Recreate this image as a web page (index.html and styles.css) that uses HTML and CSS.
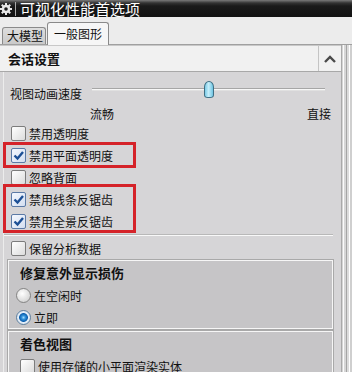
FILE: index.html
```html
<!DOCTYPE html>
<html lang="zh">
<head>
<meta charset="utf-8">
<title>可视化性能首选项</title>
<link rel="stylesheet" href="styles.css">
</head>
<body>
<div class="titlebar">
  <svg class="gear" width="12" height="12" viewBox="0 0 12 12">
    <g fill="#e8e8e8">
      <rect x="5" y="0" width="2" height="12"/>
      <rect x="0" y="5" width="12" height="2"/>
      <rect x="5" y="0" width="2" height="12" transform="rotate(45 6 6)"/>
      <rect x="5" y="0" width="2" height="12" transform="rotate(-45 6 6)"/>
      <circle cx="6" cy="6" r="4.3"/>
    </g>
    <circle cx="6" cy="6" r="1.8" fill="#1a1a1a"/>
  </svg>
  <span class="tsep"></span>
  <span class="ttext">可视化性能首选项</span>
</div>
<div class="tabstrip">
  <div class="tab">大模型</div>
  <div class="tab active">一般图形</div>
</div>
<div class="frame">
  <div class="content">
    <div class="shead">
      <span class="stitle">会话设置</span>
      <span class="collapse">
        <svg width="12" height="8" viewBox="0 0 12 8"><path d="M1 7 L6 2 L11 7" fill="none" stroke="#4a4a4a" stroke-width="2.4"/></svg>
      </span>
    </div>
    <div class="sbody">
      <div class="slider-row">
        <span class="slabel">视图动画速度</span>
        <div class="slider">
          <div class="track"></div>
          <div class="thumb"></div>
        </div>
      </div>
      <div class="ticks"><span>流畅</span><span>直接</span></div>
      <div class="row"><span class="cb"></span>禁用透明度</div>
      <div class="mark one">
        <div class="row"><span class="cb checked"><svg width="13" height="13" viewBox="0 0 13 13"><path d="M2.5 6.5 L5.5 9.5 L11 3" fill="none" stroke="#1c4f95" stroke-width="2.4"/></svg></span>禁用平面透明度</div>
      </div>
      <div class="row"><span class="cb"></span>忽略背面</div>
      <div class="mark two">
        <div class="row"><span class="cb checked"><svg width="13" height="13" viewBox="0 0 13 13"><path d="M2.5 6.5 L5.5 9.5 L11 3" fill="none" stroke="#1c4f95" stroke-width="2.4"/></svg></span>禁用线条反锯齿</div>
        <div class="row"><span class="cb checked"><svg width="13" height="13" viewBox="0 0 13 13"><path d="M2.5 6.5 L5.5 9.5 L11 3" fill="none" stroke="#1c4f95" stroke-width="2.4"/></svg></span>禁用全景反锯齿</div>
      </div>
      <div class="hr"></div>
      <div class="row"><span class="cb"></span>保留分析数据</div>
      <div class="group">
        <div class="ghead">修复意外显示损伤</div>
        <div class="grow"><span class="rb"></span>在空闲时</div>
        <div class="grow"><span class="rb on"></span>立即</div>
      </div>
      <div class="group">
        <div class="ghead">着色视图</div>
        <div class="grow"><span class="cb"></span>使用存储的小平面渲染实体</div>
      </div>
    </div>
  </div>
  <div class="edge"></div>
</div>
</body>
</html>
```

FILE: styles.css
```css
html, body {
  margin: 0;
  padding: 0;
}
body {
  width: 352px;
  height: 372px;
  overflow: hidden;
  background: #d6d5d7;
  font-family: "Noto Sans CJK SC", "Noto Sans", sans-serif;
  font-size: 12px;
  color: #111;
}
.titlebar {
  height: 17px;
  display: flex;
  align-items: center;
  background: linear-gradient(#7a7a7a 0, #333 3px, #1a1a1a 6px, #121212 100%);
  color: #fff;
}
.gear {
  flex: none;
}
.tsep {
  width: 1px;
  height: 14px;
  background: #aaa;
  margin: 0 4px 0 3px;
}
.ttext {
  font-size: 15px;
  line-height: 17px;
}
.tabstrip {
  height: 27px;
  background: #ececec;
  border-bottom: 1px solid #a0a0a0;
  display: flex;
  align-items: flex-end;
  padding-left: 2px;
  gap: 1px;
}
.tab {
  height: 16px;
  line-height: 16px;
  padding: 0 2px 0 4px;
  border: 1px solid #8a8a8a;
  border-bottom: none;
  border-radius: 3px 3px 0 0;
  background: linear-gradient(#dedede, #c9c9c9);
  font-size: 12px;
}
.tab.active {
  height: 22px;
  line-height: 22px;
  padding: 0 6px;
  background: #f6f6f6;
  margin-bottom: -1px;
}
.frame {
  display: flex;
  height: 327px;
}
.content {
  flex: 1;
  display: flex;
  flex-direction: column;
  overflow: hidden;
}
.edge {
  width: 11px;
  background: linear-gradient(to right, #a9a9a9 0 1px, #d4d4d4 1px 2px, #fbfbfb 2px 3px, #d6d6d6 3px 5px, #a4a4a4 5px 6px, #dcdcdc 6px 8px, #ffffff 8px 9px, #cfcfcf 9px 11px);
}
.shead {
  height: 27px;
  flex: none;
  display: flex;
  align-items: center;
  background: #f1f1f1;
  border-top: 1px solid #c8c8c8;
  border-bottom: 1px solid #a8a8a8;
  box-sizing: border-box;
}
.stitle {
  flex: 1;
  padding-left: 8px;
  font-size: 13px;
  font-weight: bold;
}
.collapse {
  width: 23px;
  height: 100%;
  display: flex;
  align-items: center;
  justify-content: center;
  border-left: 1px solid #c4c4c4;
  box-sizing: border-box;
}
.sbody {
  flex: 1;
  margin-left: 3px;
  border-left: 1px solid #ececec;
  display: flex;
  flex-direction: column;
}
.slider-row {
  display: flex;
  height: 22px;
  margin-top: 10px;
  padding-left: 6px;
  align-items: center;
}
.slabel {
  width: 72px;
}
.slider {
  position: relative;
  width: 233px;
  height: 22px;
  margin-left: 10px;
}
.track {
  margin-top: 6px;
  height: 1px;
  border-top: 1px solid #a6a6a6;
  background: #f7f7f7;
  border-bottom: 1px solid #e0e0e0;
}
.thumb {
  position: absolute;
  left: 112px;
  top: -1px;
  width: 8px;
  height: 15px;
  border: 1px solid #3e6f84;
  border-radius: 5px 5px 4px 4px / 6px 6px 3px 3px;
  background: linear-gradient(to right, #7ccbe6, #c6eefa 45%, #6ec4e2);
}
.ticks {
  height: 18px;
  display: flex;
  justify-content: space-between;
  align-items: center;
  padding-left: 86px;
  padding-right: 10px;
}
.row {
  height: 22px;
  display: flex;
  align-items: center;
  padding-left: 7px;
}
.cb {
  width: 13px;
  height: 13px;
  flex: none;
  margin-right: 3px;
  border: 1px solid #7c7c7c;
  border-radius: 2px;
  background: linear-gradient(135deg, #ffffff, #dcdcdc);
  display: flex;
  align-items: center;
  justify-content: center;
}
.cb.checked {
  border-color: #5b7aa6;
  background: linear-gradient(135deg, #f4f8ff, #d3def0);
}
.mark {
  position: relative;
}
.mark::after {
  content: "";
  position: absolute;
  left: -1px;
  width: 127px;
  top: -2px;
  bottom: -2px;
  border: 3px solid #d52329;
}
.mark.two::after {
  top: -4px;
  bottom: -1px;
}
.hr {
  height: 0;
  margin: 2px 8px 1px 0;
  border-top: 1px solid #b8b8b8;
  border-bottom: 1px solid #f8f8f8;
}
.group {
  margin: 1px 8px 0 4px;
  background: #c6c5c7;
  border: 1px solid #f6f6f6;
  box-shadow: 0 0 0 1px #a9a9a9;
  flex: none;
}
.group + .group {
  margin-top: 2px;
}
.ghead {
  height: 23px;
  display: flex;
  align-items: center;
  padding-left: 11px;
  font-size: 13px;
  font-weight: bold;
}
.grow {
  height: 22px;
  display: flex;
  align-items: center;
  padding-left: 7px;
}
.grow .cb {
  margin-left: 4px;
}
.rb {
  width: 13px;
  height: 13px;
  flex: none;
  margin-right: 3px;
  border: 1px solid #848484;
  border-radius: 50%;
  background: radial-gradient(circle at 40% 35%, #ffffff 0, #e6e6e6 45%, #c8c8c8 100%);
}
.rb.on {
  border-color: #5e7f9e;
  background: radial-gradient(circle at 50% 50%, #9fdcff 0, #2f8fd8 2px, #0c5fae 4px, #e4eef8 4.8px, #d4dfea 100%);
}
```
